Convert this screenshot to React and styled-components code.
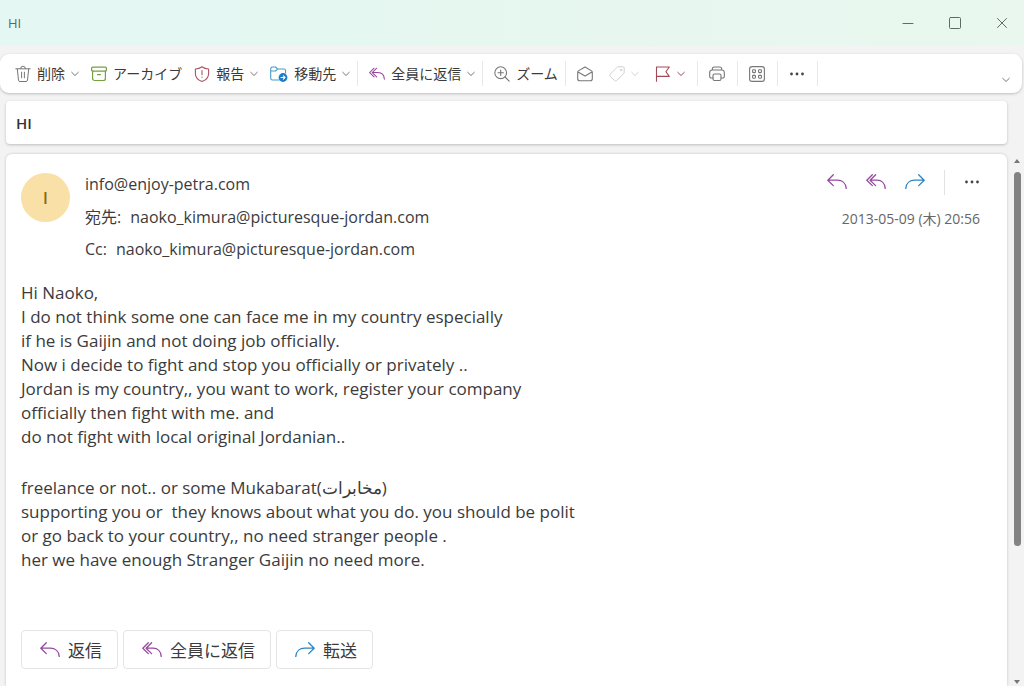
import styled, { createGlobalStyle } from "styled-components";

const GlobalStyle = createGlobalStyle`
  *,
  *::before,
  *::after {
    box-sizing: border-box;
  }

  body {
    margin: 0;
    background: #f3f3f3;
    color: #3b3b3b;
    font-family: "Open Sans", "Noto Sans CJK JP", sans-serif;
  }

  button {
    padding: 0;
    border: none;
    background: none;
    color: inherit;
    font-family: inherit;
    font-size: inherit;
    cursor: pointer;
  }
`;

const Icon = styled.svg`
  display: block;
  flex-shrink: 0;
  fill: none;
  stroke: ${(props) => props.$color || "currentColor"};
  stroke-linecap: round;
  stroke-linejoin: round;
`;

const Window = styled.div`
  display: flex;
  flex-direction: column;
  height: 100vh;
  overflow: hidden;
`;

const TitleBar = styled.header`
  display: flex;
  flex-shrink: 0;
  justify-content: space-between;
  align-items: center;
  height: 46px;
  padding: 0 15px 0 8px;
  background: linear-gradient(90deg, #e4f7f3, #e9f7ee);
  color: #5c6664;
  font-size: 13px;
`;

const WindowControls = styled.div`
  display: flex;
  gap: 33px;
  color: #5f6b66;
`;

const Toolbar = styled.nav`
  display: flex;
  flex-shrink: 0;
  align-items: center;
  height: 39px;
  margin: 8px 2px 0 0;
  padding: 0 12px 0 4px;
  border-radius: 9px;
  background: #fff;
  box-shadow: 0 1px 3px rgba(0, 0, 0, 0.22);
  font-size: 14px;
`;

const ToolGroup = styled.div`
  display: flex;
  align-items: center;
  gap: ${(props) => (props.$loose ? 16 : 12)}px;
  height: 25px;
  padding-left: 11px;
  padding-right: ${(props) => (props.$even ? 12 : 7)}px;
  border-right: 1px solid #e8e8e8;
`;

const ToolButton = styled.button`
  display: flex;
  align-items: center;
  gap: 6px;
  color: ${(props) => (props.disabled ? "#d2d2d2" : "#3b3b3b")};
  line-height: 20px;
  white-space: nowrap;
`;

const ExpandButton = styled.button`
  align-self: flex-end;
  margin-left: auto;
  padding-bottom: 9px;
`;

const Main = styled.div`
  display: flex;
  flex: 1;
  min-height: 0;
`;

const Page = styled.main`
  display: flex;
  flex: 1;
  flex-direction: column;
  min-width: 0;
  padding: 8px 0 0 6px;
`;

const SubjectCard = styled.section`
  flex-shrink: 0;
  padding: 11px 10px 9px;
  border-radius: 4px;
  background: #fff;
  box-shadow: 0 1px 3px rgba(0, 0, 0, 0.22);
`;

const Subject = styled.h1`
  margin: 0;
  color: #333;
  font-size: 15px;
  font-weight: 600;
  line-height: 23px;
`;

const MessageCard = styled.article`
  flex: 1;
  margin-top: 10px;
  padding: 14px 27px 0 15px;
  border-radius: 6px 6px 0 0;
  background: #fff;
  box-shadow: 0 0 3px rgba(0, 0, 0, 0.2);
`;

const MessageHeader = styled.header`
  display: flex;
  align-items: flex-start;
`;

const Avatar = styled.div`
  display: flex;
  flex-shrink: 0;
  justify-content: center;
  align-items: center;
  width: 49px;
  height: 49px;
  margin: 5px 15px 0 0;
  border-radius: 50%;
  background: #f9e0a7;
  color: #87690f;
  font-size: 16px;
  font-weight: 600;
`;

const Addresses = styled.div`
  flex: 1;
  font-size: 16px;
  line-height: 32px;
`;

const Sender = styled.div`
  margin-bottom: 1px;
`;

const Recipient = styled.div`
  display: flex;
  gap: 9px;
`;

const Side = styled.div`
  display: flex;
  flex-direction: column;
  align-items: flex-end;
`;

const Actions = styled.div`
  display: flex;
  align-items: center;
  gap: 19px;
  height: 28px;
`;

const ActionDivider = styled.span`
  width: 1px;
  height: 25px;
  background: #e2e2e2;
`;

const Sent = styled.time`
  margin-top: 13px;
  color: #666;
  font-size: 14px;
  line-height: 20px;
`;

const Body = styled.div`
  margin-top: 16px;
  font-size: 17px;
  line-height: 24px;

  & > p {
    margin: 0 0 27px;
    white-space: pre-wrap;
  }
`;

const ReplyBar = styled.footer`
  display: flex;
  gap: 5px;
  margin-top: 58px;
`;

const ReplyButton = styled.button`
  display: flex;
  align-items: center;
  gap: 8px;
  height: 39px;

  && {
    padding: 0 15px 0 18px;
    border: 1px solid #e4e4e4;
    border-radius: 4px;
    font-size: 17px;
  }
`;

const Scrollbar = styled.div`
  display: flex;
  flex-direction: column;
  align-items: center;
  width: 17px;
  padding: 66px 0 2px 3px;
`;

const Track = styled.div`
  flex: 1;
  width: 7px;
  margin: 9px 0;
`;

const Thumb = styled.div`
  height: 75%;
  border-radius: 4px;
  background: #838383;
`;

const purple = "#96489f";
const blue = "#2b84c4";
const grey = "#777";

function Chevron({ color }) {
  return (
    <Icon width="8" height="8" viewBox="0 0 8 8" $color={color || "#777"}>
      <path d="M.7 2.3 4 5.5l3.3-3.2" />
    </Icon>
  );
}

function ReplyIcon({ size = 20 }) {
  return (
    <Icon width={size} height={size} viewBox="0 0 20 20" $color={purple} strokeWidth="1.3">
      <path d="M6.3 2.800.8 8.200l5.500 5.400M1 8.200h9.300c5 0 8.600 3.200 8.900 8.200" />
    </Icon>
  );
}

function ReplyAllIcon({ size = 20 }) {
  return (
    <Icon width={size} height={size} viewBox="0 0 20 20" $color={purple} strokeWidth="1.3">
      <path d="M6.300 2.800.8 8.200l5.500 5.400M9.600 2.800 4.100 8.200l5.500 5.400M4.300 8.200h6.800c4.500 0 7.800 3.200 8.100 8.200" />
    </Icon>
  );
}

function ForwardIcon() {
  return (
    <Icon width="20" height="20" viewBox="0 0 20 20" $color={blue} strokeWidth="1.3">
      <path d="m13.700 2.800 5.500 5.400-5.500 5.400M19 8.200H9.700c-5 0-8.600 3.200-8.900 8.200" />
    </Icon>
  );
}

function DotsIcon() {
  return (
    <Icon width="16" height="16" viewBox="0 0 16 16">
      <g fill="#444" stroke="none">
        <circle cx="2.5" cy="8" r="1.4" />
        <circle cx="8" cy="8" r="1.4" />
        <circle cx="13.5" cy="8" r="1.4" />
      </g>
    </Icon>
  );
}

function TrashIcon() {
  return (
    <Icon width="16" height="18" viewBox="0 0 16 18" $color={grey}>
      <path d="M.8 3.8h14.4M5.6 3.6a2.4 2.4 0 0 1 4.8 0M2.3 4l1.2 11.2a1.5 1.5 0 0 0 1.5 1.3h6a1.5 1.5 0 0 0 1.5-1.3L13.7 4M6.6 7.2v5.6M9.4 7.2v5.6" />
    </Icon>
  );
}

function ArchiveIcon() {
  return (
    <Icon width="16" height="16" viewBox="0 0 16 16" $color="#76a043" strokeWidth="1.2">
      <rect x=".6" y="1.2" width="14.8" height="4" rx="1" />
      <path d="M1.6 5.2v7.3a2 2 0 0 0 2 2h8.8a2 2 0 0 0 2-2V5.2M6.5 8.6h3" />
    </Icon>
  );
}

function ShieldIcon() {
  return (
    <Icon width="16" height="16" viewBox="0 0 16 16" $color="#a85563" strokeWidth="1.1">
      <path d="M8 .7c1.900 1.500 4 2.200 6.600 2.300v4.700c0 3.600-2.300 6.200-6.600 7.700-4.300-1.500-6.600-4.100-6.600-7.700V3C4 2.900 6.100 2.200 8 .7ZM8 4.600v4.200M8 11v.2" />
    </Icon>
  );
}

function MoveIcon() {
  return (
    <Icon width="18" height="16" viewBox="0 0 18 16" $color="#4a9bc9" strokeWidth="1.1">
      <path d="M9 14H2.500A1.800 1.800 0 0 1 .7 12.200V2.800A1.800 1.800 0 0 1 2.500 1h3l2 2h6.300a1.800 1.800 0 0 1 1.800 1.800V7M.7 5h4.800l2-2" />
      <circle cx="13" cy="11.500" r="4.400" fill="#1e7cc8" stroke="none" />
      <path d="M11 11.500h4M13.400 9.900l1.600 1.600-1.600 1.600" stroke="#fff" />
    </Icon>
  );
}

function ZoomIcon() {
  return (
    <Icon width="16" height="16" viewBox="0 0 16 16" $color={grey} strokeWidth="1.1">
      <circle cx="6.700" cy="6.700" r="5.900" />
      <path d="m11 11 4.200 4.200M6.700 4v5.400M4 6.700h5.400" />
    </Icon>
  );
}

function MailIcon() {
  return (
    <Icon width="16" height="16" viewBox="0 0 16 16" $color={grey} strokeWidth="1.1">
      <path d="M.7 6.200c0-.6.200-1 .7-1.300L8 1l6.600 3.900c.5.300.7.700.7 1.300v6.500a2 2 0 0 1-2 2H2.700a2 2 0 0 1-2-2ZM1 5.900l7 4 7-4" />
    </Icon>
  );
}

function TagIcon() {
  return (
    <Icon width="16" height="16" viewBox="0 0 16 16">
      <path d="M9 .8h5.200c.6 0 1 .4 1 1V7L7.700 14.600a1.500 1.500 0 0 1-2.100 0L1.200 10.300a1.500 1.500 0 0 1 0-2.100Z" />
      <circle cx="12" cy="4" r=".8" />
    </Icon>
  );
}

function FlagIcon() {
  return (
    <Icon width="16" height="16" viewBox="0 0 16 16" $color="#a24a56" strokeWidth="1.1">
      <path d="M1.500 15.300V1h12.800l-3.400 4.700 3.400 4.700H1.500" />
    </Icon>
  );
}

function PrinterIcon() {
  return (
    <Icon width="16" height="16" viewBox="0 0 16 16" $color={grey} strokeWidth="1.1">
      <path d="M3.300 4V3a2 2 0 0 1 2-2h5.400a2 2 0 0 1 2 2v1M4 12H2.200A1.500 1.500 0 0 1 .7 10.500V6.500A2.500 2.500 0 0 1 3.200 4h9.600a2.500 2.500 0 0 1 2.500 2.500v4a1.500 1.500 0 0 1-1.500 1.500H12" />
      <rect x="4" y="8" width="8" height="6.500" rx="1.500" />
    </Icon>
  );
}

function AppsIcon() {
  return (
    <Icon width="16" height="16" viewBox="0 0 16 16" $color={grey} strokeWidth="1.1">
      <rect x=".6" y=".6" width="14.800" height="14.800" rx="2.500" />
      <rect x="3.600" y="3.800" width="2.800" height="2.800" rx=".6" />
      <rect x="9.600" y="3.800" width="2.800" height="2.800" rx=".6" />
      <rect x="3.600" y="9.400" width="2.800" height="2.800" rx=".6" />
      <rect x="9.600" y="9.400" width="2.800" height="2.800" rx=".6" />
    </Icon>
  );
}

function Arrow({ down }) {
  return (
    <Icon width="6" height="4" viewBox="0 0 6 4">
      <path d={down ? "M0 0h6L3 4Z" : "M0 4h6L3 0Z"} fill="#777" stroke="none" />
    </Icon>
  );
}

function Tool({ icon, label, name, menu, menuColor, disabled }) {
  return (
    <ToolButton type="button" aria-label={name} disabled={disabled}>
      {icon}
      {label}
      {menu && <Chevron color={menuColor} />}
    </ToolButton>
  );
}

const firstPart = `Hi Naoko,
I do not think some one can face me in my country especially
if he is Gaijin and not doing job officially.
Now i decide to fight and stop you officially or privately ..
Jordan is my country,, you want to work, register your company
officially then fight with me. and
do not fight with local original Jordanian..`;

const secondPart = `freelance or not.. or some Mukabarat(مخابرات)
supporting you or  they knows about what you do. you should be polit
or go back to your country,, no need stranger people .
her we have enough Stranger Gaijin no need more.`;

export default function App() {
  return (
    <Window>
      <GlobalStyle />
      <TitleBar>
        <span>HI</span>
        <WindowControls>
          <button type="button" aria-label="最小化">
            <Icon width="14" height="14" viewBox="0 0 14 14">
              <path d="M2 7.500h10" />
            </Icon>
          </button>
          <button type="button" aria-label="最大化">
            <Icon width="14" height="14" viewBox="0 0 14 14">
              <rect x="1.500" y="1.500" width="11" height="11" rx="1" />
            </Icon>
          </button>
          <button type="button" aria-label="閉じる">
            <Icon width="14" height="14" viewBox="0 0 14 14">
              <path d="m2.500 2.500 9 9M11.500 2.500l-9 9" />
            </Icon>
          </button>
        </WindowControls>
      </TitleBar>

      <Toolbar>
        <ToolGroup>
          <Tool icon={<TrashIcon />} label="削除" menu />
          <Tool icon={<ArchiveIcon />} label="アーカイブ" />
          <Tool icon={<ShieldIcon />} label="報告" menu />
          <Tool icon={<MoveIcon />} label="移動先" menu />
        </ToolGroup>
        <ToolGroup>
          <Tool icon={<ReplyAllIcon size={16} />} label="全員に返信" menu />
        </ToolGroup>
        <ToolGroup>
          <Tool icon={<ZoomIcon />} label="ズーム" />
        </ToolGroup>
        <ToolGroup $loose $even>
          <Tool icon={<MailIcon />} name="未読にする" />
          <Tool icon={<TagIcon />} name="分類" menu menuColor="#d2d2d2" disabled />
          <Tool icon={<FlagIcon />} name="フラグ" menu menuColor="#a24a56" />
        </ToolGroup>
        <ToolGroup $even>
          <Tool icon={<PrinterIcon />} name="印刷" />
        </ToolGroup>
        <ToolGroup $even>
          <Tool icon={<AppsIcon />} name="アプリ" />
        </ToolGroup>
        <ToolGroup $even>
          <Tool icon={<DotsIcon />} name="その他" />
        </ToolGroup>
        <ExpandButton type="button" aria-label="リボンの表示">
          <Chevron />
        </ExpandButton>
      </Toolbar>

      <Main>
        <Page>
          <SubjectCard>
            <Subject>HI</Subject>
          </SubjectCard>
          <MessageCard>
            <MessageHeader>
              <Avatar>I</Avatar>
              <Addresses>
                <Sender>info@enjoy-petra.com</Sender>
                <Recipient>
                  <span>宛先:</span>
                  <span>naoko_kimura@picturesque-jordan.com</span>
                </Recipient>
                <Recipient>
                  <span>Cc:</span>
                  <span>naoko_kimura@picturesque-jordan.com</span>
                </Recipient>
              </Addresses>
              <Side>
                <Actions>
                  <button type="button" aria-label="返信">
                    <ReplyIcon />
                  </button>
                  <button type="button" aria-label="全員に返信">
                    <ReplyAllIcon />
                  </button>
                  <button type="button" aria-label="転送">
                    <ForwardIcon />
                  </button>
                  <ActionDivider />
                  <button type="button" aria-label="その他の操作">
                    <DotsIcon />
                  </button>
                </Actions>
                <Sent dateTime="2013-05-09T20:56">2013-05-09 (木) 20:56</Sent>
              </Side>
            </MessageHeader>
            <Body>
              <p>{firstPart}</p>
              <p>{secondPart}</p>
            </Body>
            <ReplyBar>
              <ReplyButton type="button">
                <ReplyIcon />
                返信
              </ReplyButton>
              <ReplyButton type="button">
                <ReplyAllIcon />
                全員に返信
              </ReplyButton>
              <ReplyButton type="button">
                <ForwardIcon />
                転送
              </ReplyButton>
            </ReplyBar>
          </MessageCard>
        </Page>
        <Scrollbar aria-hidden="true">
          <Arrow />
          <Track>
            <Thumb />
          </Track>
          <Arrow down />
        </Scrollbar>
      </Main>
    </Window>
  );
}
